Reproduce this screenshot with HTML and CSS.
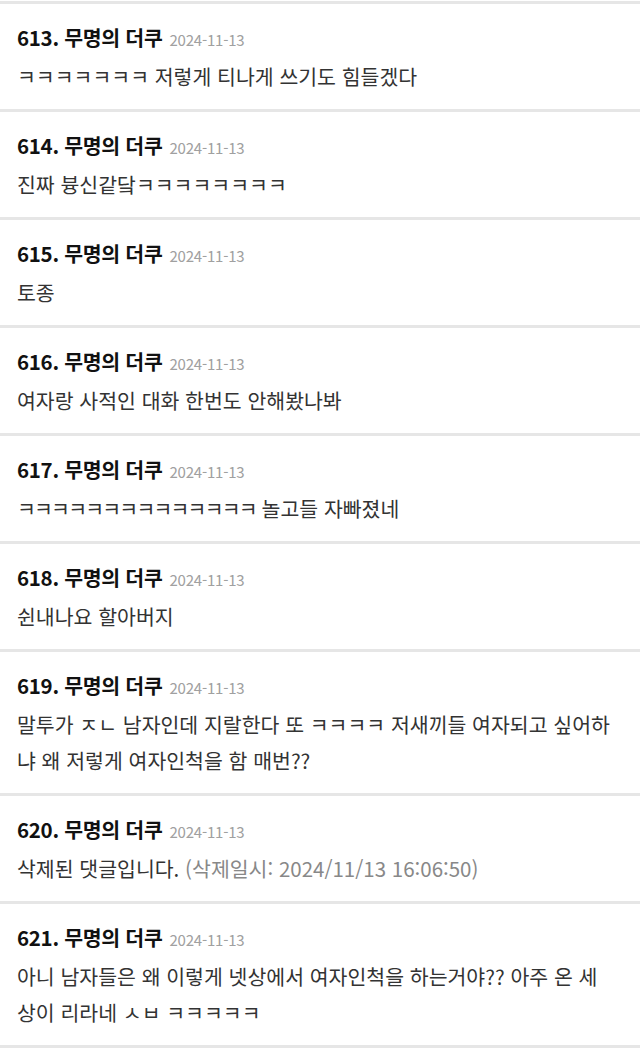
FILE: index.html
```html
<!DOCTYPE html>
<html lang="ko">
<head>
<meta charset="utf-8">
<link rel="stylesheet" href="styles.css">
</head>
<body>
<ul class="comments">
  <li class="comment">
    <div class="head"><span class="name">613. 무명의 더쿠</span><span class="date">2024-11-13</span></div>
    <p class="text">ㅋㅋㅋㅋㅋㅋㅋ 저렇게 티나게 쓰기도 힘들겠다</p>
  </li>
  <li class="comment">
    <div class="head"><span class="name">614. 무명의 더쿠</span><span class="date">2024-11-13</span></div>
    <p class="text">진짜 븅신같닼ㅋㅋㅋㅋㅋㅋㅋㅋ</p>
  </li>
  <li class="comment">
    <div class="head"><span class="name">615. 무명의 더쿠</span><span class="date">2024-11-13</span></div>
    <p class="text">토종</p>
  </li>
  <li class="comment">
    <div class="head"><span class="name">616. 무명의 더쿠</span><span class="date">2024-11-13</span></div>
    <p class="text">여자랑 사적인 대화 한번도 안해봤나봐</p>
  </li>
  <li class="comment">
    <div class="head"><span class="name">617. 무명의 더쿠</span><span class="date">2024-11-13</span></div>
    <p class="text"><span class="tight">ㅋㅋㅋㅋㅋㅋㅋㅋㅋㅋㅋㅋㅋㅋ</span> 놀고들 자빠졌네</p>
  </li>
  <li class="comment">
    <div class="head"><span class="name">618. 무명의 더쿠</span><span class="date">2024-11-13</span></div>
    <p class="text">쉰내나요 할아버지</p>
  </li>
  <li class="comment">
    <div class="head"><span class="name">619. 무명의 더쿠</span><span class="date">2024-11-13</span></div>
    <p class="text">말투가 ㅈㄴ 남자인데 지랄한다 또 ㅋㅋㅋㅋ 저새끼들 여자되고 싶어하냐 왜 저렇게 여자인척을 함 매번??</p>
  </li>
  <li class="comment">
    <div class="head"><span class="name">620. 무명의 더쿠</span><span class="date">2024-11-13</span></div>
    <p class="text">삭제된 댓글입니다. <span class="deleted">(삭제일시: 2024/11/13 16:06:50)</span></p>
  </li>
  <li class="comment">
    <div class="head"><span class="name">621. 무명의 더쿠</span><span class="date">2024-11-13</span></div>
    <p class="text">아니 남자들은 왜 이렇게 넷상에서 여자인척을 하는거야?? 아주 온 세상이 리라네 ㅅㅂ ㅋㅋㅋㅋㅋ</p>
  </li>
  <li class="comment end"></li>
</ul>
</body>
</html>
```

FILE: styles.css
```css
html, body {
  margin: 0;
  padding: 0;
  background: #fff;
}
body {
  padding-top: 1px;
  font-family: "Noto Sans CJK KR", "Noto Sans", sans-serif;
  color: #333;
}
.comments {
  list-style: none;
  margin: 0;
  padding: 0;
}
.comment {
  border-top: 3px solid #e6e6e6;
  padding: 19px 26px 15px 17px;
}
.comment.end {
  padding: 0;
  height: 10px;
}
.head {
  display: flex;
  align-items: baseline;
  height: 28px;
  line-height: 28px;
}
.name {
  font-size: 20.5px;
  font-weight: 700;
  color: #111;
  letter-spacing: -0.3px;
}
.date {
  font-size: 15px;
  color: #a0a0a0;
  margin-left: 7px;
  letter-spacing: -0.2px;
}
.text {
  margin: 7px 0 0 0;
  font-size: 20.5px;
  line-height: 36px;
  color: #333;
  word-break: normal;
  overflow-wrap: break-word;
}
.tight {
  letter-spacing: -1.8px;
}
.deleted {
  color: #888;
}
```
